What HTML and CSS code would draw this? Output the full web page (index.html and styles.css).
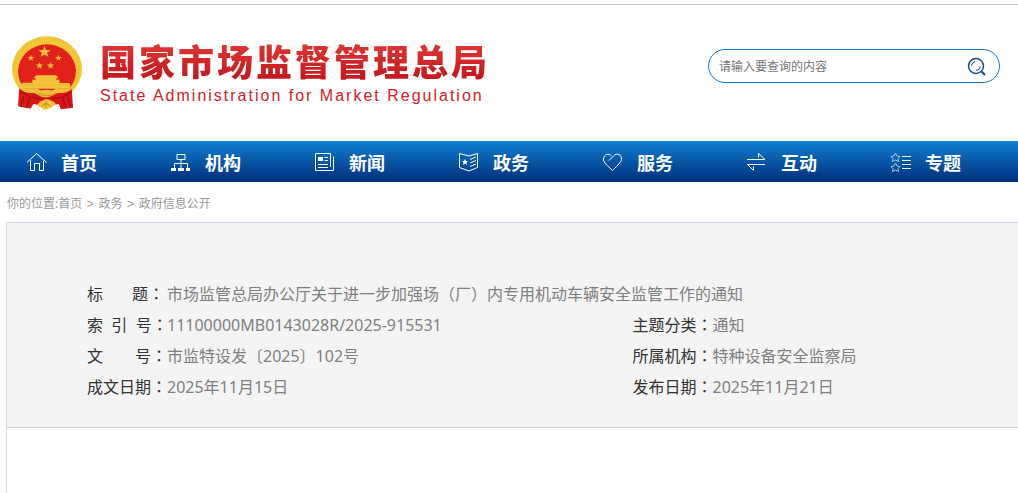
FILE: index.html
```html
<!DOCTYPE html>
<html lang="zh-CN">
<head>
  <meta charset="UTF-8">
  <meta name="viewport" content="width=device-width, initial-scale=1">
  <title>国家市场监督管理总局</title>
  <link rel="stylesheet" href="styles.css">
</head>
<body>
  <header class="header">
    <a class="logo" href="#">
      <svg class="emblem" viewBox="48 31 196 222" preserveAspectRatio="none" aria-hidden="true">
        <defs>
          <linearGradient id="gold" x1="0" y1="0" x2="0" y2="1">
            <stop offset="0" stop-color="#f0c63a"/>
            <stop offset="1" stop-color="#f3cd33"/>
          </linearGradient>
          <path id="star" d="M0-10 2.4-3.2 9.5-3.1 3.9 1.3 5.9 8.1 0 4-5.9 8.1-3.9 1.3-9.5-3.1-2.4-3.2Z"/>
        </defs>
        <circle cx="146" cy="130" r="98" fill="url(#gold)"/>
        <circle cx="146" cy="130" r="90" fill="none" stroke="#e5b02a" stroke-width="2" stroke-dasharray="7 5"/>
        <circle cx="146" cy="137" r="81" fill="#e3211b"/>
        <g fill="#ecc040">
          <use href="#star" transform="translate(139 79) scale(1.8)"/>
          <use href="#star" transform="translate(101 97)"/>
          <use href="#star" transform="translate(178 97)"/>
          <use href="#star" transform="translate(125 120) scale(1.1)"/>
          <use href="#star" transform="translate(156 120) scale(1.1)"/>
        </g>
        <path fill="#f5c53a" d="M117 149h55l6 8h-6v5h9v10h26l4 4v13H74v-15l5-3h26v-9h9v-5h-6Z"/>
        <path stroke="#dfa426" stroke-width="1" d="M113 157h63M105 163h75M76 178h135"/>
        <path fill="#d9151a" d="M68 189h44l10 17 23 8 25-8 9-17h36l4 57-34 5-6-16-37 6-34-6-8 14-35-7Z"/>
        <path stroke="#9e0c12" stroke-width="3" fill="none" d="M72 198l30 17 24 4M216 198l-28 17-25 4M80 214l-8 30M97 217l-9 30M204 214l8 29M190 217l9 29"/>
        <path fill="#efbc35" d="M70 188h45c7 0 10 8 18 6 9-2 16-2 25 0 8 2 10-6 17-6h41c-8 12-23 15-37 14-11 0-20 14-36 13-17 1-24-13-36-13-14 1-29-2-37-14Z"/>
        <path fill="#f3c63a" d="M120 240c0-8 7-14 14-15 7-7 20-4 23 0 8 1 14 6 14 13-9 0-9 10-18 9-8 8-18 5-21-1-5 1-8-4-12-6Z"/>
        <path stroke="#cf8e19" stroke-width="3" fill="none" d="M122 204c12 8 36 8 49-1M132 241l11-9 12 9M143 228v19"/>
      </svg>
      <span class="logo-text">
        <span class="logo-cn">国家市场监督管理总局</span>
        <span class="logo-en">State Administration for Market Regulation</span>
      </span>
    </a>
    <form class="search">
      <input type="text" aria-label="搜索" placeholder="请输入要查询的内容">
      <button type="submit" aria-label="查询">
        <svg viewBox="0 0 20 20" aria-hidden="true">
          <circle cx="9" cy="10" r="7.5" stroke-width="1.5"/>
          <path stroke-width="2" d="M14.5 15.5 18 19"/>
          <path d="M4.5 9.5A5 5 0 0 1 8 5.5M13.500 10.500A5 5 0 0 1 9 14.500"/>
        </svg>
      </button>
    </form>
  </header>

  <nav class="nav">
    <a href="#">
      <svg viewBox="0 0 22 20"><path d="M1 10.500 10.500 1.500 20.500 10.500M4.500 8.500V18.500H8.500V11.500H13.500V18.500H17.500V8.500"/></svg>
      首页
    </a>
    <a href="#">
      <svg viewBox="0 0 22 20"><path d="M7 2.500H15V7.500H7ZM11 7.500V11.500M4.500 16V11.500H17.500V16M11 11.500V16"/><path class="solid" d="M1 16h5v3H1ZM8 16h6v3H8ZM16 16h4v3h-4Z"/></svg>
      机构
    </a>
    <a href="#">
      <svg viewBox="0 0 22 20"><path d="M16.500 15V1.500H1.500V18.500H19.500V4.500M10.500 5.500H14M10.500 8.500H14M4 12.500H14M4 15.500H14"/><path class="solid" d="M4 5h5v4H4Z"/></svg>
      新闻
    </a>
    <a href="#">
      <svg viewBox="0 0 22 20"><path d="M11 4 1.500 1.500V15.500L11 19 19.500 15.500V1.500L11 4M12 7.500 18 5M12 11 18 8.500M12 14.500 18 12"/><path class="solid" d="M7 7 8 9h2L8.500 10.500 9 13 7 11.500 5 13 5.500 10.500 4 9H6Z"/></svg>
      政务
    </a>
    <a href="#">
      <svg viewBox="0 0 22 20"><path d="M7 8.500 11.500 4C15 0 20 3 19.500 7.500 19 10 17 12 10.500 18.500 3 11.500 1.500 10 1.500 7 2 2 7 1 9.500 4"/></svg>
      服务
    </a>
    <a href="#">
      <svg viewBox="0 0 22 20"><path d="M1 7.500H19L12.500 1.500V5.500M19 12.500H1.500L7.500 18.500V14.500"/></svg>
      互动
    </a>
    <a href="#">
      <svg viewBox="0 0 22 20"><path class="thin" d="M5.500 1 7 4 10 4.500 8 6.500 8.500 9.500 5.500 8 2.500 9.500 3 6.500 1 4.500 4 4ZM5.500 11 7 14 10 14.500 8 16.500 8.500 19.500 5.500 18 2.500 19.500 3 16.500 1 14.500 4 14Z"/><path d="M12 4.500H21M12 8.500H21M12 12.500H21M12 16.500H21"/></svg>
      专题
    </a>
  </nav>

  <div class="breadcrumb">你的位置:<a href="#">首页</a> <i>&gt;</i> <a href="#">政务</a> <i>&gt;</i> <a href="#">政府信息公开</a></div>

  <main class="article">
    <div class="info">
      <table>
        <colgroup>
          <col class="col-label"><col class="col-value"><col class="col-label"><col>
        </colgroup>
        <tr>
          <th scope="row">标&nbsp;&nbsp;&nbsp;&nbsp;&nbsp;&nbsp;&nbsp;题<span class="punct" lang="zh-TW">：</span></th>
          <td colspan="3">市场监管总局办公厅关于进一步加强场<span class="punct" lang="zh-TW">（</span>厂<span class="punct" lang="zh-TW">）</span>内专用机动车辆安全监管工作的通知</td>
        </tr>
        <tr>
          <th scope="row">索&nbsp;&nbsp;引&nbsp;&nbsp;号<span class="punct" lang="zh-TW">：</span></th>
          <td>11100000MB0143028R/2025-915531</td>
          <th scope="row">主题分类<span class="punct" lang="zh-TW">：</span></th>
          <td>通知</td>
        </tr>
        <tr>
          <th scope="row">文&ensp;&ensp;&ensp;&ensp;号<span class="punct" lang="zh-TW">：</span></th>
          <td>市监特设发〔2025〕102号</td>
          <th scope="row">所属机构<span class="punct" lang="zh-TW">：</span></th>
          <td>特种设备安全监察局</td>
        </tr>
        <tr>
          <th scope="row">成文日期<span class="punct" lang="zh-TW">：</span></th>
          <td>2025年11月15日</td>
          <th scope="row">发布日期<span class="punct" lang="zh-TW">：</span></th>
          <td>2025年11月21日</td>
        </tr>
      </table>
    </div>
  </main>
</body>
</html>
```
FILE: styles.css
```css
* { margin: 0; padding: 0; box-sizing: border-box; }
html, body { height: 100%; }
body {
  display: flex;
  flex-direction: column;
  padding-top: 4px;
  background: #fff;
  font-family: "Noto Sans", "Noto Sans CJK SC", sans-serif;
  font-size: 12px;
}
a { color: inherit; text-decoration: none; }

/* header */
.header {
  display: flex;
  justify-content: space-between;
  align-items: flex-start;
  height: 137px;
  padding: 31px 18px 0 12px;
  border-top: 1px solid #ccc;
  flex: none;
}
.logo { display: flex; gap: 18px; }
.emblem { width: 70px; height: 74px; }
.logo-text { display: flex; flex-direction: column; padding-top: 4px; }
.logo-cn {
  font: 900 36px/40px "Noto Sans CJK SC", sans-serif;
  letter-spacing: 3px;
  background: linear-gradient(#e03a36, #c4161c);
  -webkit-background-clip: text;
  background-clip: text;
  color: transparent;
}
.logo-en { margin-top: 6px; font: 16px/20px "Liberation Sans", sans-serif; letter-spacing: 2px; color: #d0222a; }

.search {
  display: flex;
  align-items: center;
  width: 292px;
  height: 34px;
  margin-top: 13px;
  padding: 0 12px 0 10px;
  border: 1px solid #1179cc;
  border-radius: 17px;
}
.search input {
  flex: 1;
  min-width: 0;
  border: 0;
  outline: 0;
  background: none;
  font: 12px/20px "Noto Sans CJK SC", sans-serif;
}
.search input::placeholder { color: #757575; }
.search button { width: 20px; height: 20px; border: 0; background: none; cursor: pointer; }
.search svg { display: block; width: 20px; height: 20px; fill: none; stroke: #164a94; }

/* nav */
.nav {
  display: flex;
  flex: none;
  height: 41px;
  padding-left: 26px;
  background: linear-gradient(#117fcf, #002e7e);
  overflow: hidden;
}
.nav a {
  display: flex;
  flex: none;
  align-items: center;
  gap: 13px;
  width: 144px;
  color: #fff;
  font-size: 18px;
  font-weight: bold;
}
.nav svg { width: 22px; height: 20px; fill: none; stroke: #fff; }
.nav .solid { fill: #fff; stroke: none; }
.nav .thin { stroke: #a9c8e8; }

.breadcrumb { padding: 3px 7px 0; line-height: 37px; color: #999; }
.breadcrumb i { display: inline-block; width: 10px; text-align: center; font: 12px "Liberation Sans", sans-serif; }

/* document info */
.article { flex: 1; margin-left: 6px; border: 1px solid #d0daea; border-width: 1px 0 0 1px; }
.info { padding: 56px 0 24px 80px; background: #f4f4f4; border-bottom: 1px solid #ccc; }
.info table { width: 100%; table-layout: fixed; border-collapse: collapse; font-size: 16px; }
.info th, .info td { height: 31px; line-height: 31px; text-align: left; white-space: nowrap; }
.info th { color: #333; font-weight: normal; }
.info td { color: #808080; }
.info .punct { font-family: "Noto Sans CJK TC", sans-serif; line-height: 20px; }
.col-label { width: 80px; }
.col-value { width: 50%; }
```
